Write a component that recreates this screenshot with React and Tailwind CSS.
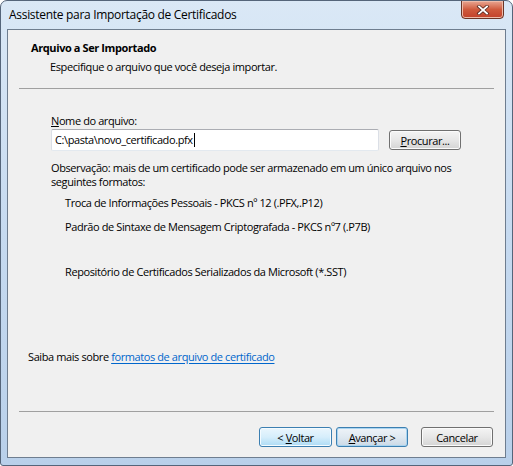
import React from 'react';

// Win7 style push button
const Button = ({ children, variant = 'normal', className = '' }) => {
  const styles = {
    normal:
      'border-[#707070] bg-linear-to-b from-[#f4f4f4] via-[#e7e7e7] to-[#d4d4d4] shadow-[inset_0_0_0_1px_#fbfbfb]',
    hover:
      'border-[#3c7fb1] bg-linear-to-b from-[#eaf6fd] via-[#d6eefb] to-[#acdbf5] shadow-[inset_0_0_0_1px_#f4fbff]',
    default:
      'border-[#3c7fb1] bg-linear-to-b from-[#eef3f8] via-[#e0e9f1] to-[#cbd9e6] shadow-[inset_0_0_0_1px_#a9d4f0]',
  };
  return (
    <button
      className={`h-[20px] rounded-[3px] border text-[11px] leading-none tracking-[-0.4px] text-black flex items-center justify-center ${styles[variant]} ${className}`}
    >
      <span className="whitespace-pre">{children}</span>
    </button>
  );
};

const Mn = ({ children }) => <span className="underline underline-offset-[1px]">{children}</span>;

const App = () => {
  return (
    <div className="w-[513px] h-[466px] flex flex-col rounded-t-[7px] rounded-b-[3px] border border-[#55657a] bg-linear-to-b from-[#dae8f6] via-[#c6daf0] to-[#b9d0ea] font-['Open_Sans',sans-serif] overflow-hidden">
      {/* Title bar */}
      <div className="h-[28px] flex shrink-0">
        <div className="flex-1 pl-[8px] pt-[4px] text-[12px] leading-[20px] tracking-[-0.3px] text-black">
          Assistente para Importação de Certificados
        </div>
        <div className="-mt-px mr-[8px] w-[43px] h-[19px] rounded-b-[4px] border border-[#6b3526] bg-linear-to-b from-[#e8a692] via-[#cf5a3d] to-[#c2412a] shadow-[inset_0_0_0_1px_#eebba9] flex items-center justify-center">
          <svg width="14" height="10" viewBox="0 0 14 10">
            <path d="M3 1.5 L11 8.5 M11 1.5 L3 8.5" stroke="#5a2a20" strokeWidth="3.4" strokeLinecap="square" />
            <path d="M3 1.5 L11 8.5 M11 1.5 L3 8.5" stroke="#ffffff" strokeWidth="1.8" strokeLinecap="square" />
          </svg>
        </div>
      </div>

      {/* Wizard panel */}
      <div className="flex-1 mx-[6px] mb-[7px] border border-[#6e7d8f] bg-[#f0f0f0] flex flex-col text-[11px] tracking-[-0.4px] text-black">
        <div className="pt-[10px] pl-[23px] leading-[16px] font-bold">Arquivo a Ser Importado</div>
        <div className="mt-[3px] pl-[42px] leading-[16px]">Especifique o arquivo que você deseja importar.</div>
        <div className="mt-[13px] mx-[11px] h-px bg-[#a0a0a0]" />

        <div className="mt-[24px] pl-[43px] leading-[16px]">
          <Mn>N</Mn>ome do arquivo:
        </div>
        <div className="pl-[43px] flex items-center">
          <div className="w-[328px] h-[22px] rounded-[2px] border border-[#abadb3] border-l-[#dbdfe6] border-r-[#dbdfe6] border-b-[#e3e9ef] bg-white flex items-center pl-[3px]">
            <span>C:\pasta\novo_certificado.pfx</span>
            <span className="ml-px w-px h-[14px] bg-black" />
          </div>
          <Button className="ml-[10px] w-[72px]">
            <Mn>P</Mn>rocurar...
          </Button>
        </div>

        <div className="mt-[10px] pl-[43px] leading-[14px]">
          Observação: mais de um certificado pode ser armazenado em um único arquivo nos
          <br />
          seguintes formatos:
        </div>
        <div className="mt-[6px] pl-[57px] leading-[16px]">Troca de Informações Pessoais - PKCS nº 12 (.PFX,.P12)</div>
        <div className="mt-[8px] pl-[57px] leading-[16px]">Padrão de Sintaxe de Mensagem Criptografada - PKCS nº7 (.P7B)</div>
        <div className="mt-[29px] pl-[57px] leading-[16px]">Repositório de Certificados Serializados da Microsoft (*.SST)</div>

        <div className="mt-[69px] pl-[20px] leading-[16px]">
          Saiba mais sobre{' '}
          <a href="#" className="text-[#0066cc] underline underline-offset-[2px]">
            formatos de arquivo de certificado
          </a>
        </div>

        <div className="mt-auto mx-[11px] h-px bg-[#a0a0a0]" />
        <div className="mt-[15px] pb-[10px] pr-[12px] flex justify-end">
          <Button variant="hover" className="w-[73px]">
            {'< '}<Mn>V</Mn>oltar
          </Button>
          <Button variant="default" className="ml-[4px] w-[72px]">
            <Mn>A</Mn>{'vançar >'}
          </Button>
          <Button className="ml-[13px] w-[72px]">Cancelar</Button>
        </div>
      </div>
    </div>
  );
};

export default App;
